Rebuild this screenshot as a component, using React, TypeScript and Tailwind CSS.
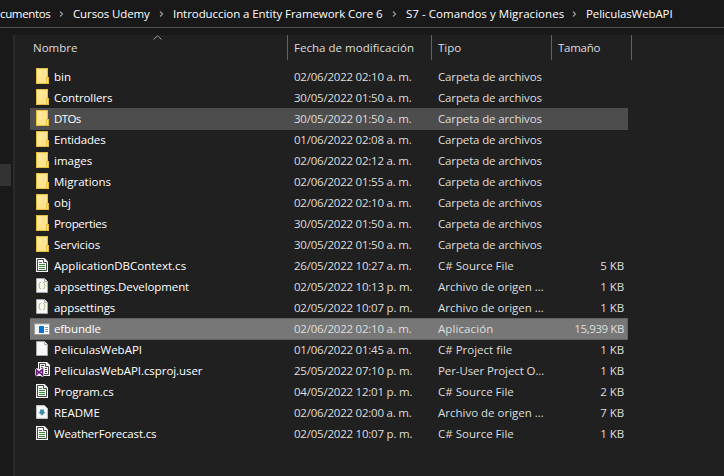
import React from "react";

type IconKind = "folder" | "cs" | "json" | "app" | "blank" | "vs" | "readme";

interface FileRow {
  name: string;
  date: string;
  type: string;
  size?: string;
  icon: IconKind;
  track?: string;
}

const FOLDER = "Carpeta de archivos";
const CS = "C# Source File";
const ORIGIN = "Archivo de origen ...";

const rows: FileRow[] = [
  { name: "bin", date: "02/06/2022 02:10 a. m.", type: FOLDER, icon: "folder" },
  { name: "Controllers", date: "30/05/2022 01:50 a. m.", type: FOLDER, icon: "folder", track: "tracking-[-0.1px]" },
  { name: "DTOs", date: "30/05/2022 01:50 a. m.", type: FOLDER, icon: "folder", track: "tracking-[-0.6px]" },
  { name: "Entidades", date: "01/06/2022 02:08 a. m.", type: FOLDER, icon: "folder", track: "tracking-[-0.15px]" },
  { name: "images", date: "02/06/2022 02:12 a. m.", type: FOLDER, icon: "folder" },
  { name: "Migrations", date: "02/06/2022 01:55 a. m.", type: FOLDER, icon: "folder" },
  { name: "obj", date: "02/06/2022 02:10 a. m.", type: FOLDER, icon: "folder" },
  { name: "Properties", date: "30/05/2022 01:50 a. m.", type: FOLDER, icon: "folder", track: "tracking-[-0.3px]" },
  { name: "Servicios", date: "30/05/2022 01:50 a. m.", type: FOLDER, icon: "folder", track: "tracking-[-0.1px]" },
  { name: "ApplicationDBContext.cs", date: "26/05/2022 10:27 a. m.", type: CS, size: "5 KB", icon: "cs", track: "tracking-[0.02px]" },
  { name: "appsettings.Development", date: "02/05/2022 10:13 p. m.", type: ORIGIN, size: "1 KB", icon: "json", track: "tracking-[-0.1px]" },
  { name: "appsettings", date: "02/05/2022 10:07 p. m.", type: ORIGIN, size: "1 KB", icon: "json", track: "tracking-[-0.1px]" },
  { name: "efbundle", date: "02/06/2022 02:10 a. m.", type: "Aplicación", size: "15,939 KB", icon: "app", track: "tracking-[-0.12px]" },
  { name: "PeliculasWebAPI", date: "01/06/2022 01:45 a. m.", type: "C# Project file", size: "1 KB", icon: "blank" },
  { name: "PeliculasWebAPI.csproj.user", date: "25/05/2022 07:10 p. m.", type: "Per-User Project O...", size: "1 KB", icon: "vs", track: "tracking-[-0.07px]" },
  { name: "Program.cs", date: "04/05/2022 12:01 p. m.", type: CS, size: "2 KB", icon: "cs", track: "tracking-[-0.1px]" },
  { name: "README", date: "02/06/2022 02:00 a. m.", type: ORIGIN, size: "7 KB", icon: "readme" },
  { name: "WeatherForecast.cs", date: "02/05/2022 10:07 p. m.", type: CS, size: "1 KB", icon: "cs", track: "tracking-[-0.16px]" },
];

const crumbs = [
  { label: "cumentos", width: "w-[50px] tracking-[-0.35px]" },
  { label: "Cursos Udemy", width: "w-[77px] tracking-[-0.12px]" },
  { label: "Introduccion a Entity Framework Core 6", width: "w-[210px] tracking-[-0.07px]" },
  { label: "S7 - Comandos y Migraciones", width: "w-[159px] tracking-[0.05px]" },
  { label: "PeliculasWebAPI", width: "w-[90px] tracking-[-0.1px]" },
];

function Page({ fill = "#f7f7f7", edge = "#a8a8a8" }: { fill?: string; edge?: string }) {
  return (
    <>
      <path d="M0.5 0.5H8.5L11.5 3.5V14.5H0.5Z" fill={fill} stroke={edge} />
      <path d="M8.5 0.5V3.5H11.5" fill="#fff" stroke={edge} />
    </>
  );
}

function FileIcon({ kind }: { kind: IconKind }) {
  switch (kind) {
    case "folder":
      return (
        <svg width="13" height="16" viewBox="0 0 13 16" shapeRendering="crispEdges">
          <rect width="12" height="16" fill="#e8bf3d" />
          <rect x="1" y="1" width="10" height="14" fill="#ffe48f" />
          <rect x="1" y="1" width="5" height="8" fill="#ffe89c" />
          <rect x="10" y="9" width="3" height="7" fill="#e8bf3d" />
          <rect x="11" y="10" width="1" height="5" fill="#ffe48f" />
        </svg>
      );
    case "cs":
      return (
        <svg width="12" height="14" viewBox="0 0 12 14">
          <path d="M0 0H8.5L12 3.5V14H0Z" fill="#f4f4f4" />
          <path d="M1.5 1.5H7.5V4.5H10.5V12.5H1.5Z" fill="#f8f8f8" stroke="#454545" />
          <path d="M3 4.5H6M3 6.5H9M3 8.5H9M3 10.5H9" stroke="#388a34" />
        </svg>
      );
    case "json":
      return (
        <svg width="12" height="15" viewBox="0 0 12 15">
          <Page />
          <path d="M5 4.5H4.5Q3.5 4.5 3.5 5.5V6.5L2.8 7.5L3.5 8.5V9.5Q3.5 10.5 4.5 10.5H5M7 4.5H7.5Q8.5 4.5 8.5 5.5V6.5L9.2 7.5L8.5 8.5V9.5Q8.5 10.5 7.5 10.5H7" fill="none" stroke="#a9ad52" />
        </svg>
      );
    case "app":
      return (
        <svg width="16" height="12" viewBox="0 0 16 12" shapeRendering="crispEdges">
          <rect width="16" height="12" fill="#999" />
          <rect x="1" y="1" width="14" height="10" fill="#fff" />
          <rect x="1" y="1" width="14" height="1" fill="#d5d5d5" />
          <rect x="1" y="3" width="4" height="7" fill="#eeeeee" />
          <rect x="5" y="3" width="5" height="7" fill="#0873d4" />
          <path d="M11 4.5H14M11 6.5H14M11 8.5H14" stroke="#7d9cb8" />
        </svg>
      );
    case "blank":
      return (
        <svg width="12" height="15" viewBox="0 0 12 15">
          <Page />
        </svg>
      );
    case "vs":
      return (
        <svg width="15" height="15" viewBox="0 0 15 15">
          <path d="M3 0H12L15 3V14H3Z" fill="#f4f4f4" />
          <path d="M4.5 7V1.5H10.5V4.5H13.5V12.5H9" fill="none" stroke="#454545" />
          <path d="M6 3.5H9M6 5.5H8M10 6.5H12M10 8.5H12M10 10.5H12" stroke="#454545" />
          <path d="M0 7.5L2 6L4.5 8L7 5.5L9 6.5V14L7 15L4.5 12.5L2 14.5L0 13Z" fill="#f4f4f4" />
          <path d="M1.5 8L7.5 13V7.5L1.5 12.5Z" fill="none" stroke="#68217a" strokeWidth="1.6" />
        </svg>
      );
    case "readme":
      return (
        <svg width="12" height="14" viewBox="0 0 12 14">
          <path d="M0.5 0.5H8.5L11.5 3.5V13.5H0.5Z" fill="#f7f7f7" stroke="#b8c2c7" />
          <path d="M4 4L5 5L6 4L7 5L8 4V7H9.5L6 10.8L2.5 7H4Z" fill="#438cae" />
        </svg>
      );
  }
}

const iconOffset: Record<IconKind, string> = {
  folder: "pl-[6px] pt-[2px]",
  cs: "pl-[6px] pt-[3px]",
  json: "pl-[6px] pt-[2px]",
  app: "pl-[4px] pt-[5px]",
  blank: "pl-[6px] pt-[2px]",
  vs: "pl-[5px] pt-[2px]",
  readme: "pl-[6px] pt-[3px]",
};

export default function App() {
  return (
    <div className="flex h-[476px] w-[724px] flex-col overflow-hidden bg-[#191919] font-['Open_Sans','Noto_Sans',sans-serif] text-[11.5px] whitespace-nowrap text-white">
      <nav className="flex h-[28px] shrink-0 items-center border-b border-[#535353]">
        {crumbs.map((c, i) => (
          <React.Fragment key={c.label}>
            {i > 0 && (
              <svg
                className={`shrink-0 ${i === 4 ? "mr-[9px] ml-[7px]" : "mx-[9px]"}`}
                width="5"
                height="6"
                viewBox="0 0 5 6"
              >
                <path d="M1 0.5L3.5 3L1 5.5" fill="none" stroke="#9b9b9b" strokeWidth="1.2" />
              </svg>
            )}
            <span className={`shrink-0 ${c.width}`}>{c.label}</span>
          </React.Fragment>
        ))}
      </nav>
      <div className="mt-[7px] flex flex-1">
        <aside className="w-[13px] shrink-0 pt-[129px]">
          <div className="h-[22px] w-[11px] bg-[#333333]" />
        </aside>
        <main className="flex-1 border-l-2 border-[#2b2b2b] bg-[#202020]">
          <header className="flex h-[25px] leading-[25px] text-[#dedede]">
            <div className="relative w-[273px] border-r border-[#636363] pl-[18px]">
              Nombre
              <svg className="absolute top-0 left-[138px]" width="9" height="5" viewBox="0 0 9 5">
                <path d="M0.5 4.5L4.5 0.8L8.5 4.5" fill="none" stroke="#a0a0a0" />
              </svg>
            </div>
            <div className="w-[144px] border-r border-[#636363] pl-[6px] tracking-[0.03px]">Fecha de modificación</div>
            <div className="w-[120px] border-r border-[#636363] pl-[6px]">Tipo</div>
            <div className="w-[80px] border-r border-[#636363] pl-[6px] tracking-[-0.25px]">Tamaño</div>
          </header>
          <div className="mt-[6px] ml-[15px] w-[598px]">
            {rows.map((r, i) => (
              <div
                key={i}
                className={`flex h-[21px] leading-[21px] text-[#dedede] ${
                  r.name === "DTOs"
                    ? "bg-[#4d4d4d] shadow-[0_1px_0_#4d4d4d]"
                    : r.icon === "app"
                      ? "bg-[#777777] shadow-[inset_0_1px_0_#626262,inset_-1px_0_0_#626262,0_1px_0_#626262]"
                      : ""
                }`}
              >
                <div className={`w-[24px] shrink-0 ${iconOffset[r.icon]}`}>
                  <FileIcon kind={r.icon} />
                </div>
                <div className={`w-[240px] shrink-0 text-white ${r.track ?? ""}`}>{r.name}</div>
                <div className="w-[144px] shrink-0 tracking-[-0.22px]">{r.date}</div>
                <div
                  className={`w-[120px] shrink-0 ${
                    r.type === FOLDER
                      ? "tracking-[-0.14px]"
                      : r.type.startsWith("Per-User")
                        ? "tracking-[-0.1px]"
                        : r.type === "Aplicación"
                          ? "tracking-[0.1px]"
                          : ""
                  }`}
                >
                  {r.type}
                </div>
                <div className={`flex-1 pr-[4px] text-right ${r.icon === "app" ? "tracking-[-0.4px]" : "tracking-[-0.1px]"}`}>
                  {r.size}
                </div>
              </div>
            ))}
          </div>
        </main>
      </div>
    </div>
  );
}
